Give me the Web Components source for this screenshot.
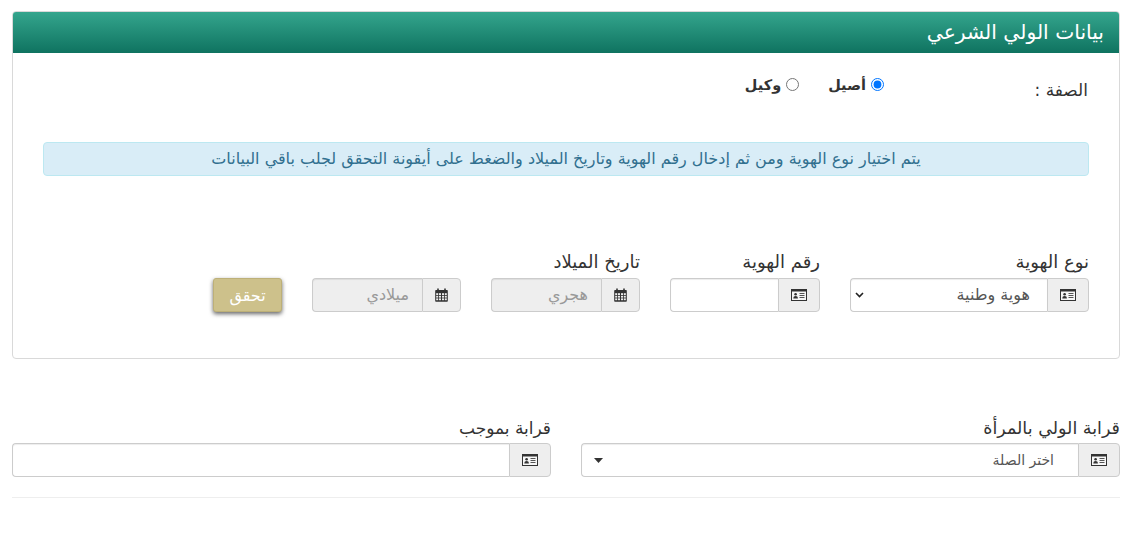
<!DOCTYPE html>
<html lang="ar" dir="rtl">
<head>
<meta charset="utf-8">
<title>بيانات الولي الشرعي</title>
<style>
  html, body { margin: 0; background: #fff; }
  body { font-family: "DejaVu Sans", "Liberation Sans", sans-serif; color: #333; }
  .page { padding: 11px 7px 0 12px; }
  .second { margin-top: 58px; --label-size: 17.500px; --label-gap: 4px; }
</style>
</head>
<body>
<div class="page">
  <panel-box heading="بيانات الولي الشرعي">
    <radio-row></radio-row>
    <info-note>يتم اختيار نوع الهوية ومن ثم إدخال رقم الهوية وتاريخ الميلاد والضغط على أيقونة التحقق لجلب باقي البيانات</info-note>
    <id-form></id-form>
  </panel-box>
  <relation-row class="second"></relation-row>
</div>

<script>
const cardIcon = `<svg width="16" height="12" viewBox="0 0 16 12"><rect x=".5" y=".5" width="15" height="11" fill="#f7f7f7" stroke="#333"/><rect x="1" y="1" width="14" height="1.500" fill="#333"/><circle cx="4.600" cy="5.300" r="1.300" fill="#333"/><path d="M2.300 9.500c0-1.700 1-2.500 2.300-2.500s2.300.8 2.300 2.500z" fill="#333"/><path d="M8.500 4.500h5M8.500 6.500h5M8.500 8.500h5" stroke="#555"/></svg>`;
const calIcon = `<svg width="13" height="14" viewBox="0 0 13 14"><path d="M1 2h11a.8.8 0 0 1 .8.8V13a.8.8 0 0 1-.8.8H1a.8.8 0 0 1-.8-.8V2.800A.8.8 0 0 1 1 2z" fill="#333"/><path d="M3 .5v2.500M10 .5v2.500" stroke="#333" stroke-width="1.600"/><g fill="#eee"><rect x="1.200" y="5.200" width="2" height="1.800"/><rect x="4" y="5.200" width="2" height="1.800"/><rect x="7" y="5.200" width="2" height="1.800"/><rect x="9.800" y="5.200" width="2" height="1.800"/><rect x="1.200" y="7.800" width="2" height="1.800"/><rect x="4" y="7.800" width="2" height="1.800"/><rect x="7" y="7.800" width="2" height="1.800"/><rect x="9.800" y="7.800" width="2" height="1.800"/><rect x="1.200" y="10.400" width="2" height="1.800"/><rect x="4" y="10.400" width="2" height="1.800"/><rect x="7" y="10.400" width="2" height="1.800"/><rect x="9.800" y="10.400" width="2" height="1.800"/></g></svg>`;

class PanelBox extends HTMLElement {
  constructor() {
    super();
    this.attachShadow({ mode: 'open' });
    this.shadowRoot.innerHTML = `
      <style>
        :host { display: block; border: 1px solid #d9d9d9; border-radius: 4px; height: 348px; box-sizing: border-box; overflow: hidden; }
        .head { height: 41px; background: linear-gradient(#34a58d, #0f7360); color: #fff; font-size: 20.300px; line-height: 41px; padding: 0 15px; }
        .body { display: block; }
      </style>
      <div class="head">${this.getAttribute('heading')}</div>
      <div class="body"><slot></slot></div>`;
  }
}

class RadioRow extends HTMLElement {
  constructor() {
    super();
    this.attachShadow({ mode: 'open' });
    this.shadowRoot.innerHTML = `
      <style>
        :host { display: flex; padding: 22px 31px 0 0; height: 68px; box-sizing: border-box; font-size: 17px; }
        .label { width: 204px; line-height: 30px; }
        label { display: flex; align-items: flex-start; font-size: 14.500px; font-weight: 700; line-height: 20px; margin-left: 29px; }
        input { margin: 3px 0 0 5px; width: 13px; height: 13px; }
      </style>
      <div class="label">الصفة :</div>
      <label><input type="radio" name="s" checked>أصيل</label>
      <label><input type="radio" name="s">وكيل</label>`;
  }
}

class InfoNote extends HTMLElement {
  constructor() {
    super();
    this.attachShadow({ mode: 'open' });
    this.shadowRoot.innerHTML = `
      <style>
        :host { display: block; margin: 21px 30px 0; height: 34px; line-height: 32px; box-sizing: border-box; background: #d9edf7; border: 1px solid #bce8f1; border-radius: 4px; color: #31708f; font-size: 16px; text-align: center; }
      </style>
      <slot></slot>`;
  }
}

class InputGroup extends HTMLElement {
  constructor() {
    super();
    this.attachShadow({ mode: 'open' });
    const isCal = this.getAttribute('icon') === 'cal';
    const pad = this.getAttribute('arrow') === 'caret' ? 24 : 17;
    this.shadowRoot.innerHTML = `
      <style>
        :host { display: block; }
        .title { display: block; font-size: var(--label-size, 18px); line-height: 22px; margin-bottom: var(--label-gap, 5px); color: #333; min-height: 22px; }
        .group { display: flex; height: 34px; box-sizing: border-box; }
        .addon { flex: none; width: ${isCal ? 39 : 42}px; box-sizing: border-box; display: flex; align-items: center; justify-content: center; background: #eee; border: 1px solid #ccc; border-radius: 0 4px 4px 0; }
        .field { flex: 1; min-width: 0; box-sizing: border-box; border: 1px solid #ccc; border-right: 0; border-radius: 4px 0 0 4px; background: #fff; font-size: ${this.getAttribute('arrow') === 'caret' ? 14 : 16}px; color: #555; line-height: 32px; padding: 0 ${isCal ? 13 : pad}px; position: relative; box-shadow: inset 0 1px 1px rgba(0,0,0,.075); }
        .field.off { background: #eee; color: #999; }
      </style>
      <span class="title"><slot></slot></span>
      <div class="group">
        <span class="addon">${isCal ? calIcon : cardIcon}</span>
        <div class="field ${this.hasAttribute('off') ? 'off' : ''}">${this.getAttribute('value') || ''}${this.getAttribute('arrow') ? this.arrow() : ''}</div>
      </div>`;
  }
  arrow() {
    const glyph = this.getAttribute('arrow') === 'chev'
      ? '<svg width="9" height="6" viewBox="0 0 9 6" style="position:absolute;left:4px;top:13px"><path d="M1 1l3.500 3.500L8 1" fill="none" stroke="#222" stroke-width="1.600"/></svg>'
      : '<svg width="9" height="5" viewBox="0 0 9 5" style="position:absolute;left:12px;top:14px"><path d="M0 0h9L4.500 5z" fill="#333"/></svg>';
    return glyph;
  }
}

class IdForm extends HTMLElement {
  constructor() {
    super();
    this.attachShadow({ mode: 'open' });
    this.shadowRoot.innerHTML = `
      <style>
        :host { display: flex; align-items: flex-end; gap: 30px; margin: 75px 30px 0 0; }
        input-group { width: 239px; }
        .w150 { width: 150px; }
        .w149 { width: 149px; }
        button { font: 400 16px "DejaVu Sans", sans-serif; width: 69px; height: 34px; color: #fff; background: #cdc18b; border: 1px solid #bdb078; border-radius: 3px; box-shadow: 0 2px 4px rgba(0,0,0,.6); padding: 0; }
      </style>
      <input-group icon="card" value="هوية وطنية" arrow="chev">نوع الهوية</input-group>
      <input-group class="w150" icon="card">رقم الهوية</input-group>
      <input-group class="w149" icon="cal" off value="هجري">تاريخ الميلاد</input-group>
      <input-group class="w149" icon="cal" off value="ميلادي"></input-group>
      <button>تحقق</button>`;
  }
}

class RelationRow extends HTMLElement {
  constructor() {
    super();
    this.attachShadow({ mode: 'open' });
    this.shadowRoot.innerHTML = `
      <style>
        :host { display: block; border-bottom: 1px solid #eee; padding-bottom: 20px; }
        .row { display: grid; grid-template-columns: 539px 539px; gap: 30px; }
        .narrow { --label-size: 17px; }
      </style>
      <div class="row">
        <input-group icon="card" value="اختر الصلة" arrow="caret">قرابة الولي بالمرأة</input-group>
        <input-group class="narrow" icon="card">قرابة بموجب</input-group>
      </div>`;
  }
}

customElements.define('panel-box', PanelBox);
customElements.define('radio-row', RadioRow);
customElements.define('info-note', InfoNote);
customElements.define('input-group', InputGroup);
customElements.define('id-form', IdForm);
customElements.define('relation-row', RelationRow);
</script>
</body>
</html>
